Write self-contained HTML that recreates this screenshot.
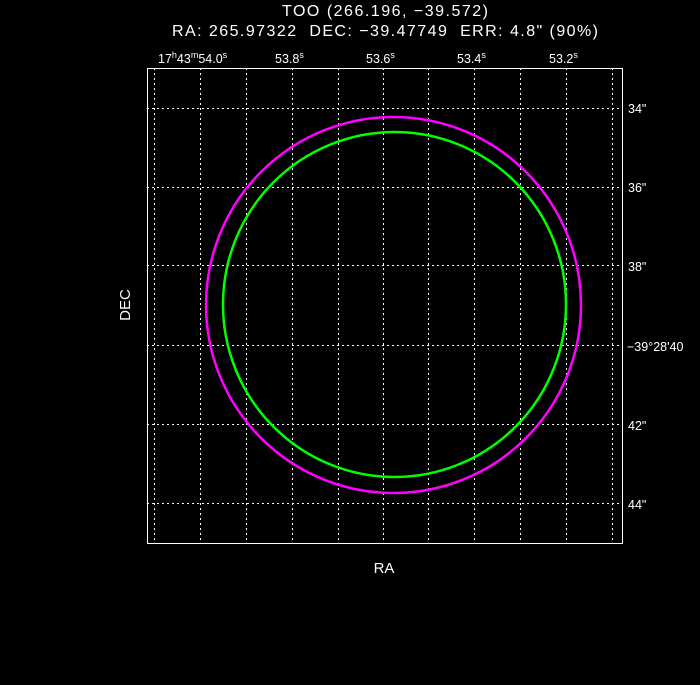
<!DOCTYPE html>
<html><head><style>
body{margin:0;background:#000;width:700px;height:680px;overflow:hidden}
svg text{font-family:"Liberation Sans","DejaVu Sans",sans-serif;fill:#fff;white-space:pre}
</style></head><body>
<svg width="700" height="680" xmlns="http://www.w3.org/2000/svg">
<text x="385" y="16" font-size="16" text-anchor="middle" textLength="206">TOO (266.196, −39.572)</text>
<text x="385" y="36" font-size="16" text-anchor="middle" textLength="426">RA: 265.97322  DEC: −39.47749  ERR: 4.8" (90%)</text>
<g font-size="12.5">
<text x="158" y="63">17<tspan dy="-5" font-size="9">h</tspan><tspan dy="5">43</tspan><tspan dy="-5" font-size="9">m</tspan><tspan dy="5">54.0</tspan><tspan dy="-5" font-size="9">s</tspan></text>
<text x="275" y="63">53.8<tspan dy="-5" font-size="9">s</tspan></text>
<text x="366" y="63">53.6<tspan dy="-5" font-size="9">s</tspan></text>
<text x="457" y="63">53.4<tspan dy="-5" font-size="9">s</tspan></text>
<text x="549" y="63">53.2<tspan dy="-5" font-size="9">s</tspan></text>
<text x="628" y="113">34"</text>
<text x="628" y="192">36"</text>
<text x="628" y="271">38"</text>
<text x="627" y="351">−39°28'40</text>
<text x="628" y="430">42"</text>
<text x="628" y="509">44"</text>
</g>
<text x="384" y="573" font-size="15" text-anchor="middle">RA</text>
<text x="0" y="0" font-size="15" text-anchor="middle" transform="translate(130,305) rotate(-90)">DEC</text>
<g stroke="#fff" stroke-width="1" stroke-dasharray="2,3">
<line x1="154.5" y1="68" x2="154.5" y2="543"/><line x1="200.5" y1="68" x2="200.5" y2="543"/>
<line x1="246.5" y1="68" x2="246.5" y2="543"/><line x1="292.5" y1="68" x2="292.5" y2="543"/>
<line x1="338.5" y1="68" x2="338.5" y2="543"/><line x1="383.5" y1="68" x2="383.5" y2="543"/>
<line x1="428.5" y1="68" x2="428.5" y2="543"/><line x1="474.5" y1="68" x2="474.5" y2="543"/>
<line x1="520.5" y1="68" x2="520.5" y2="543"/><line x1="566.5" y1="68" x2="566.5" y2="543"/>
<line x1="612.5" y1="68" x2="612.5" y2="543"/>
<line x1="147" y1="108.5" x2="623" y2="108.5"/><line x1="147" y1="187.5" x2="623" y2="187.5"/>
<line x1="147" y1="265.5" x2="623" y2="265.5"/><line x1="147" y1="345.5" x2="623" y2="345.5"/>
<line x1="147" y1="424.5" x2="623" y2="424.5"/><line x1="147" y1="503.5" x2="623" y2="503.5"/>
</g>
<rect x="147.5" y="68.5" width="475" height="475" fill="none" stroke="#fff"/>
<ellipse cx="393.5" cy="305" rx="187.5" ry="188" fill="none" stroke="#f0f" stroke-width="2.5"/>
<ellipse cx="394.5" cy="304.5" rx="171.5" ry="172.5" fill="none" stroke="#0f0" stroke-width="2.5"/>
</svg>
</body></html>
